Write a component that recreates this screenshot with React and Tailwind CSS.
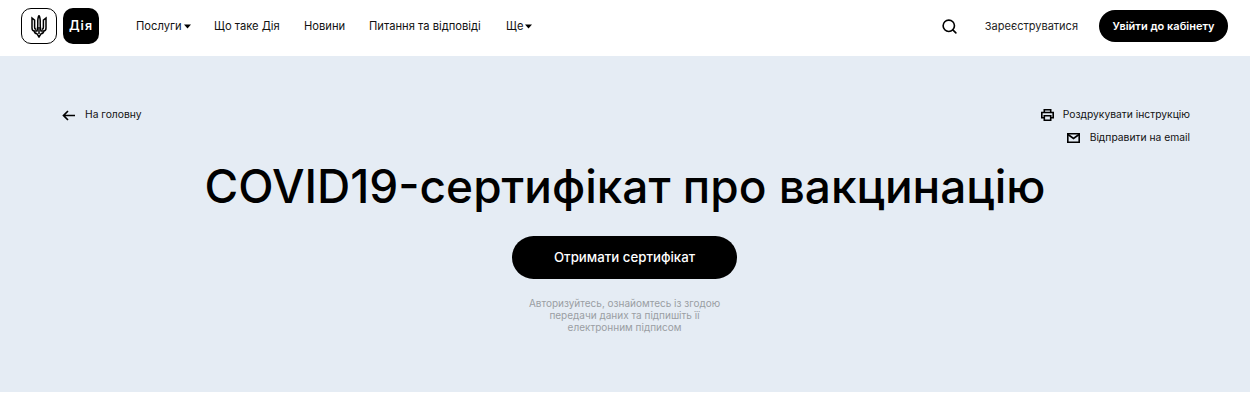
import { Search } from 'lucide-react';

const font = { fontFamily: 'Inter, "Noto Sans", sans-serif' };

function Caret() {
  return (
    <svg width="7" height="5" viewBox="0 0 7 5" className="ml-[2px] mt-[1px]">
      <path d="M0 0.5h7L3.5 4.5z" fill="#000" />
    </svg>
  );
}

function Trident() {
  return (
    <svg width="16" height="23" viewBox="0 0 16 23" fill="none" stroke="#000" strokeWidth="1.5">
      <path d="M8 .5C6.8 2.5 6.6 4.500 6.800 8.500c.1 3-.2 5.500-.8 7.500H3.500C1.800 16 1 15 1 13V3l2.600 2.200V12c0 1.400.4 2.200 1.400 2.200" />
      <path d="M8 .5c1.200 2 1.400 4 1.200 8-.1 3 .2 5.500.8 7.500h2.500c1.700 0 2.500-1 2.500-3V3l-2.600 2.200V12c0 1.400-.4 2.200-1.400 2.200" />
      <path d="M3 16.200c.6 2 2 2.400 3 2.600l2 3.200 2-3.200c1-.2 2.400-.6 3-2.600M8 12v7" />
    </svg>
  );
}

function BackArrow() {
  return (
    <svg width="13" height="11" viewBox="0 0 13 11" fill="none" stroke="#000" strokeWidth="1.7" className="mr-[10px]">
      <path d="M13 5.500H1.500M6 1 1.500 5.500 6 10" />
    </svg>
  );
}

function PrintIcon() {
  return (
    <svg width="13" height="12" viewBox="0 0 13 12" fill="none" stroke="#000" strokeWidth="1.6" className="mr-[9px]">
      <path d="M3.300 3.500V.8h6.400v2.700" />
      <path d="M3 8.800H.8V3.500h11.400v5.300H10" />
      <path d="M3.300 6.800h6.400v4.400H3.300z" />
    </svg>
  );
}

function MailIcon() {
  return (
    <svg width="13" height="10" viewBox="0 0 13 10" fill="none" stroke="#000" strokeWidth="1.6" className="mr-[10px]">
      <path d="M.8.8h11.400v8.400H.8z" />
      <path d="M1 1.500l5.500 4 5.500-4" />
    </svg>
  );
}

function Header() {
  return (
    <header className="h-14 bg-white flex items-center pb-1 pl-[21px] pr-[22px] text-[11.2px] text-[#111] font-normal">
      <div className="flex items-center gap-[6px]">
        <div className="w-[36px] h-[36px] rounded-[10px] border border-black flex items-center justify-center">
          <Trident />
        </div>
        <div className="w-[36px] h-[36px] rounded-[10px] bg-black text-white flex items-center justify-center text-[12.500px] font-semibold tracking-[1px]">
          Дія
        </div>
      </div>
      <nav className="flex items-center ml-[37px]">
        <a className="flex items-center w-[78px]">Послуги<Caret /></a>
        <a className="w-[90px]">Що таке Дія</a>
        <a className="w-[65px]">Новини</a>
        <a className="w-[137px]">Питання та відповіді</a>
        <a className="flex items-center">Ще<Caret /></a>
      </nav>
      <div className="ml-auto flex items-center">
        <Search size={17} strokeWidth={2.300} className="text-black" />
        <a className="ml-[27px] text-[11px] text-[#222]">Зареєструватися</a>
        <button className="ml-[21px] w-[129px] h-[32px] rounded-full bg-black text-white text-[11px] font-semibold">
          Увійти до кабінету
        </button>
      </div>
    </header>
  );
}

export default function App() {
  return (
    <div className="w-[1250px] h-[404px] bg-white overflow-hidden" style={font}>
      <Header />
      <main className="h-[336px] bg-[#e5ecf4] pl-[62px] pr-[60px] pt-[51px] flex flex-col">
        <div className="flex justify-between items-start h-[40px]">
          <a className="flex items-center text-[10.300px] text-[#111] h-[16px]">
            <BackArrow />
            На головну
          </a>
          <div className="flex flex-col items-end text-[10.300px] text-[#111] gap-[7px]">
            <a className="flex items-center h-[16px]">
              <PrintIcon />
              Роздрукувати інструкцію
            </a>
            <a className="flex items-center h-[16px]">
              <MailIcon />
              Відправити на email
            </a>
          </div>
        </div>
        <h1 className="text-center text-[46px] leading-[56px] font-medium text-black mt-[11px] -ml-[2px] whitespace-nowrap">
          COVID19-сертифікат про вакцинацію
        </h1>
        <button className="self-center -ml-[3px] mt-[22px] w-[225px] h-[43px] rounded-full bg-black text-white text-[13.250px] font-medium">
          Отримати сертифікат
        </button>
        <p className="self-center -ml-[3px] mt-[18px] w-[200px] text-center text-[10px] leading-[12px] text-[#9a9ea3]">
          Авторизуйтесь, ознайомтесь із згодою передачи даних та підпишіть її електронним підписом
        </p>
      </main>
    </div>
  );
}
